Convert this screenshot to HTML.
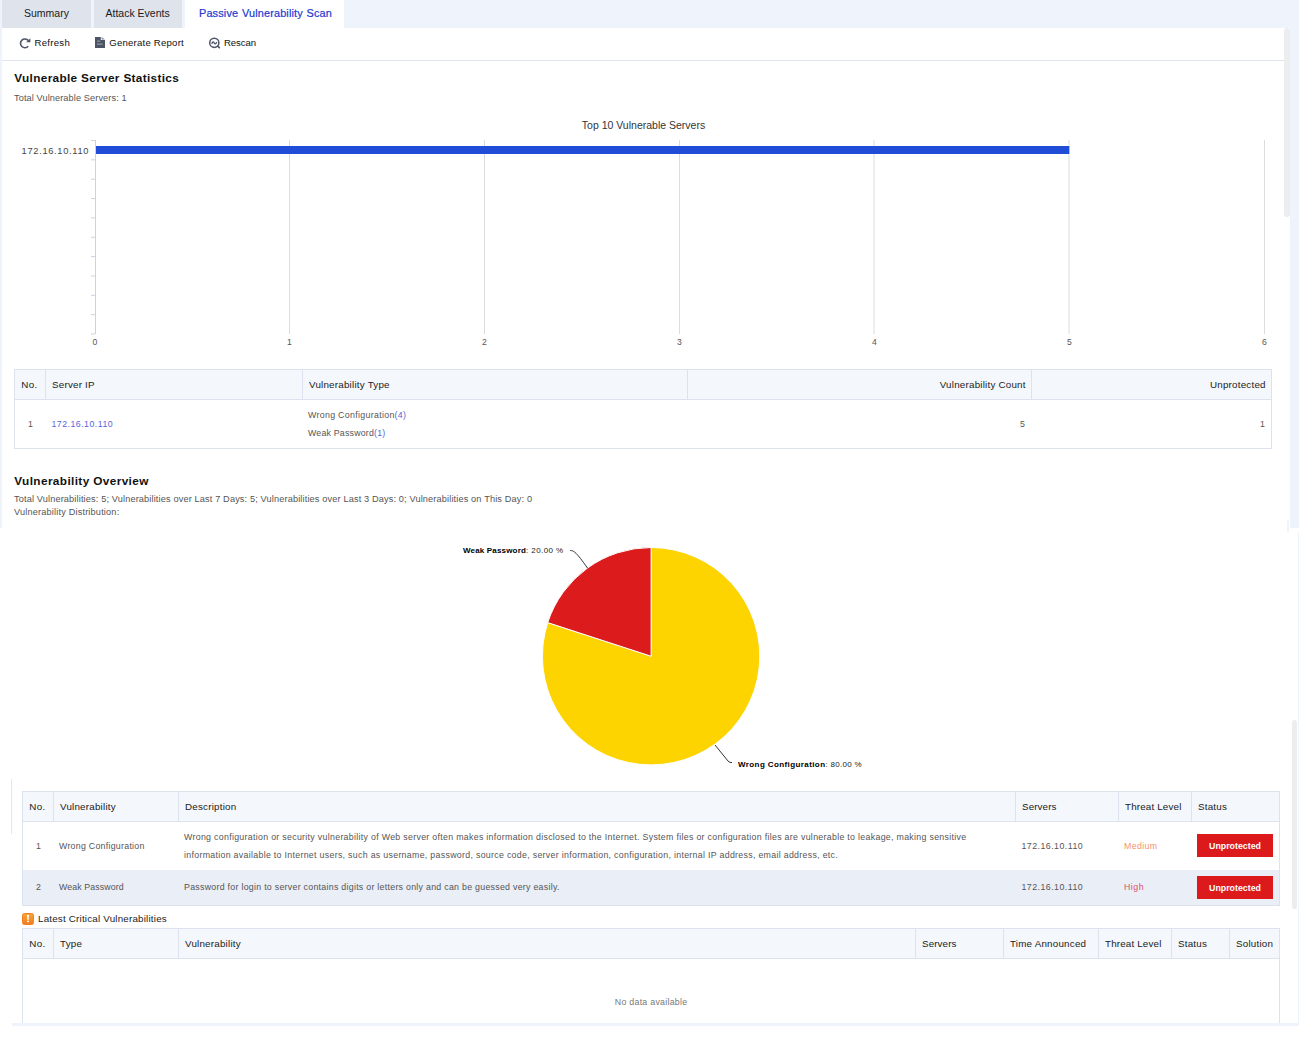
<!DOCTYPE html>
<html><head><meta charset="utf-8"><title>Passive Vulnerability Scan</title>
<style>
html,body{margin:0;padding:0;}
body{width:1299px;height:1038px;position:relative;overflow:hidden;background:#fff;font-family:"Liberation Sans", sans-serif;}
body>div,body>svg{position:absolute;box-sizing:border-box;}
.t{line-height:1;white-space:nowrap;}
</style></head><body>
<div style="left:0px;top:0px;width:1299px;height:528px;background:#eff3fc"></div>
<div style="left:2px;top:28px;width:1288px;height:500px;background:#fff"></div>
<div style="left:2px;top:0px;width:89px;height:28px;background:#dfe3ec"></div>
<div style="left:94px;top:0px;width:88px;height:28px;background:#dfe3ec"></div>
<div style="left:185px;top:0px;width:159px;height:28px;background:#fff"></div>
<div class="t" style="left:24px;top:7.91px;font-size:10.5px;color:#1a1a1a;">Summary</div>
<div class="t" style="left:105.5px;top:7.91px;font-size:10.5px;color:#1a1a1a;">Attack Events</div>
<div class="t" style="left:199px;top:8.07px;font-size:10.9px;color:#2438d2;letter-spacing:0.15px;word-spacing:0.6px;-webkit-text-stroke:0.2px #2438d2;">Passive Vulnerability Scan</div>
<div style="left:2px;top:60px;width:1282px;height:1px;background:#dfe4ee"></div>
<div style="left:1284px;top:28px;width:6px;height:189px;background:#ebedef;border-radius:3px"></div>
<svg style="left:18px;top:35.5px" width="14" height="14" viewBox="0 0 14 14"><path d="M10.2 10.3 A4.4 4.4 0 1 1 10.3 4.6" fill="none" stroke="#4d5466" stroke-width="1.6"/><path d="M8.2 6.2 L12.4 6.2 L12.4 2.2 Z" fill="#4d5466"/></svg>
<div class="t" style="left:34.5px;top:38.07px;font-size:9.6px;color:#111;letter-spacing:0.28px;">Refresh</div>
<svg style="left:94px;top:36px" width="12" height="13" viewBox="0 0 12 13"><path d="M1 1 H6.8 V4 H11 V12 H1 Z" fill="#4d5466"/><path d="M7.6 1 L11 3.4 H7.6 Z" fill="#8a8f9c"/><rect x="3" y="4.6" width="3.2" height="1.1" fill="#9a9fab"/><rect x="3" y="7.6" width="5.6" height="1.1" fill="#9a9fab"/></svg>
<div class="t" style="left:109.3px;top:38.07px;font-size:9.6px;color:#111;letter-spacing:0.21px;">Generate Report</div>
<svg style="left:207px;top:36px" width="15" height="14" viewBox="0 0 15 14"><circle cx="7.3" cy="6.8" r="4.6" fill="none" stroke="#4d5466" stroke-width="1.5"/><path d="M10.6 10 L12.3 11.6" stroke="#4d5466" stroke-width="1.7" stroke-linecap="round"/><path d="M4.7 7.9 Q5.9 4.4 7.1 6.8 Q8.3 9.4 9.8 6.0" fill="none" stroke="#4d5466" stroke-width="1.3"/></svg>
<div class="t" style="left:224px;top:38.07px;font-size:9.6px;color:#111;letter-spacing:-0.08px;">Rescan</div>
<div class="t" style="left:14.3px;top:73.41px;font-size:11.8px;color:#111;font-weight:bold;letter-spacing:0.33px;">Vulnerable Server Statistics</div>
<div class="t" style="left:14px;top:93.51px;font-size:9.2px;color:#555;letter-spacing:0.1px;">Total Vulnerable Servers: 1</div>
<div class="t" style="left:243.50px;width:800px;text-align:center;top:119.91px;font-size:10.5px;color:#333;">Top 10 Vulnerable Servers</div>
<svg style="left:0;top:130px" width="1290" height="230" viewBox="0 130 1290 230"><line x1="289.5" y1="140" x2="289.5" y2="334" stroke="#dcdcdc" stroke-width="1"/><line x1="484.5" y1="140" x2="484.5" y2="334" stroke="#dcdcdc" stroke-width="1"/><line x1="679.5" y1="140" x2="679.5" y2="334" stroke="#dcdcdc" stroke-width="1"/><line x1="874" y1="140" x2="874" y2="334" stroke="#dcdcdc" stroke-width="1"/><line x1="1069" y1="140" x2="1069" y2="334" stroke="#dcdcdc" stroke-width="1"/><line x1="1264.5" y1="140" x2="1264.5" y2="334" stroke="#dcdcdc" stroke-width="1"/><line x1="95.5" y1="140" x2="95.5" y2="334" stroke="#c9d3e3" stroke-width="1"/><line x1="91" y1="140.50" x2="95" y2="140.50" stroke="#c9d3e3" stroke-width="1"/><line x1="91" y1="159.85" x2="95" y2="159.85" stroke="#c9d3e3" stroke-width="1"/><line x1="91" y1="179.20" x2="95" y2="179.20" stroke="#c9d3e3" stroke-width="1"/><line x1="91" y1="198.55" x2="95" y2="198.55" stroke="#c9d3e3" stroke-width="1"/><line x1="91" y1="217.90" x2="95" y2="217.90" stroke="#c9d3e3" stroke-width="1"/><line x1="91" y1="237.25" x2="95" y2="237.25" stroke="#c9d3e3" stroke-width="1"/><line x1="91" y1="256.60" x2="95" y2="256.60" stroke="#c9d3e3" stroke-width="1"/><line x1="91" y1="275.95" x2="95" y2="275.95" stroke="#c9d3e3" stroke-width="1"/><line x1="91" y1="295.30" x2="95" y2="295.30" stroke="#c9d3e3" stroke-width="1"/><line x1="91" y1="314.65" x2="95" y2="314.65" stroke="#c9d3e3" stroke-width="1"/><line x1="91" y1="334.00" x2="95" y2="334.00" stroke="#c9d3e3" stroke-width="1"/><rect x="96" y="146" width="973.3" height="8" fill="#1f4dd8"/></svg>
<div class="t" style="right:1209.82px;top:146.63px;font-size:9.3px;color:#444;letter-spacing:0.68px;">172.16.10.110</div>
<div class="t" style="left:-305.00px;width:800px;text-align:center;top:337.72px;font-size:8.6px;color:#555;">0</div>
<div class="t" style="left:-110.50px;width:800px;text-align:center;top:337.72px;font-size:8.6px;color:#555;">1</div>
<div class="t" style="left:84.50px;width:800px;text-align:center;top:337.72px;font-size:8.6px;color:#555;">2</div>
<div class="t" style="left:279.50px;width:800px;text-align:center;top:337.72px;font-size:8.6px;color:#555;">3</div>
<div class="t" style="left:474.50px;width:800px;text-align:center;top:337.72px;font-size:8.6px;color:#555;">4</div>
<div class="t" style="left:669.50px;width:800px;text-align:center;top:337.72px;font-size:8.6px;color:#555;">5</div>
<div class="t" style="left:864.50px;width:800px;text-align:center;top:337.72px;font-size:8.6px;color:#555;">6</div>
<div style="left:14px;top:369px;width:1258px;height:80px;border:1px solid #dde3ee;background:#fff"></div>
<div style="left:15px;top:370px;width:1256px;height:29px;background:#f4f7fb"></div>
<div style="left:15px;top:399px;width:1256px;height:1px;background:#dde3ee"></div>
<div style="left:45px;top:370px;width:1px;height:29px;background:#dde3ee"></div>
<div style="left:302px;top:370px;width:1px;height:29px;background:#dde3ee"></div>
<div style="left:687px;top:370px;width:1px;height:29px;background:#dde3ee"></div>
<div style="left:1031px;top:370px;width:1px;height:29px;background:#dde3ee"></div>
<div class="t" style="left:21.3px;top:379.70px;font-size:9.8px;color:#222;letter-spacing:0.4px;">No.</div>
<div class="t" style="left:52px;top:379.70px;font-size:9.8px;color:#222;letter-spacing:0.22px;">Server IP</div>
<div class="t" style="left:309px;top:379.70px;font-size:9.8px;color:#222;letter-spacing:0.22px;">Vulnerability Type</div>
<div class="t" style="right:273.28px;top:379.70px;font-size:9.8px;color:#222;letter-spacing:0.22px;">Vulnerability Count</div>
<div class="t" style="right:33.28px;top:379.70px;font-size:9.8px;color:#222;letter-spacing:0.22px;">Unprotected</div>
<div class="t" style="left:28px;top:419.55px;font-size:8.8px;color:#555;">1</div>
<div class="t" style="left:51.5px;top:419.55px;font-size:8.8px;color:#5865d8;letter-spacing:0.46px;">172.16.10.110</div>
<div class="t" style="left:308px;top:410.55px;font-size:8.8px;color:#555;letter-spacing:0.32px;">Wrong Configuration<span style="color:#5865d8">(4)</span></div>
<div class="t" style="left:308px;top:428.55px;font-size:8.8px;color:#555;letter-spacing:0.2px;">Weak Password<span style="color:#5865d8">(1)</span></div>
<div class="t" style="right:274.00px;top:419.55px;font-size:8.8px;color:#555;">5</div>
<div class="t" style="right:34.00px;top:419.55px;font-size:8.8px;color:#555;">1</div>
<div class="t" style="left:14.3px;top:475.61px;font-size:11.8px;color:#111;font-weight:bold;letter-spacing:0.38px;">Vulnerability Overview</div>
<div class="t" style="left:14px;top:494.71px;font-size:9.2px;color:#555;letter-spacing:0.14px;">Total Vulnerabilities: 5; Vulnerabilities over Last 7 Days: 5; Vulnerabilities over Last 3 Days: 0; Vulnerabilities on This Day: 0</div>
<div class="t" style="left:14px;top:508.21px;font-size:9.2px;color:#555;letter-spacing:0.17px;">Vulnerability Distribution:</div>
<div style="left:0px;top:0px;width:2px;height:519px;background:#eff3fc"></div>
<div style="left:0px;top:528px;width:1299px;height:510px;background:#fff"></div>
<div style="left:1298px;top:532px;width:1px;height:491px;background:#eff3fc"></div>
<div style="left:1287px;top:520px;width:2px;height:12px;background:#eff3fc"></div>
<svg style="left:0;top:528px" width="1299" height="250" viewBox="0 528 1299 250">
<path d="M651.1 656.2 L651.1 547.5 A108.7 108.7 0 1 1 547.72 622.61 Z" fill="#fdd300" stroke="#fff" stroke-width="1"/>
<path d="M651.1 656.2 L547.72 622.61 A108.7 108.7 0 0 1 651.1 547.5 Z" fill="#dc1b1d" stroke="#fff" stroke-width="1"/>
<path d="M570 550.5 C574 550.5 576 552 587.5 568" fill="none" stroke="#333" stroke-width="1"/>
<path d="M715 745 L728 761 C729.5 762.5 730.5 762.5 732 762.5" fill="none" stroke="#333" stroke-width="1"/>
</svg>
<div class="t" style="left:463px;top:547.23px;font-size:8px;color:#222;letter-spacing:0.42px;"><b style="color:#000;letter-spacing:0.17px">Weak Password</b>: 20.00 %</div>
<div class="t" style="left:738px;top:761.23px;font-size:8px;color:#222;letter-spacing:0.3px;"><b style="color:#000;letter-spacing:0.4px">Wrong Configuration</b>: 80.00 %</div>
<div style="left:11px;top:779px;width:1px;height:55px;background:#e3e7f0"></div>
<div style="left:22px;top:791px;width:1258px;height:115px;border:1px solid #dde3ee;background:#fff"></div>
<div style="left:23px;top:792px;width:1256px;height:29px;background:#f4f7fb"></div>
<div style="left:23px;top:821px;width:1256px;height:1px;background:#dde3ee"></div>
<div style="left:23px;top:870px;width:1256px;height:35px;background:#e9eef7"></div>
<div style="left:53px;top:792px;width:1px;height:29px;background:#dde3ee"></div>
<div style="left:178px;top:792px;width:1px;height:29px;background:#dde3ee"></div>
<div style="left:1015px;top:792px;width:1px;height:29px;background:#dde3ee"></div>
<div style="left:1118px;top:792px;width:1px;height:29px;background:#dde3ee"></div>
<div style="left:1191px;top:792px;width:1px;height:29px;background:#dde3ee"></div>
<div class="t" style="left:29.3px;top:801.70px;font-size:9.8px;color:#222;letter-spacing:0.4px;">No.</div>
<div class="t" style="left:60px;top:801.70px;font-size:9.8px;color:#222;letter-spacing:0.22px;">Vulnerability</div>
<div class="t" style="left:185px;top:801.70px;font-size:9.8px;color:#222;letter-spacing:0.22px;">Description</div>
<div class="t" style="left:1022px;top:801.70px;font-size:9.8px;color:#222;letter-spacing:0.12px;">Servers</div>
<div class="t" style="left:1125px;top:801.70px;font-size:9.8px;color:#222;letter-spacing:0.17px;">Threat Level</div>
<div class="t" style="left:1198px;top:801.70px;font-size:9.8px;color:#222;letter-spacing:0.22px;">Status</div>
<div class="t" style="left:36px;top:842.05px;font-size:8.8px;color:#555;">1</div>
<div class="t" style="left:59px;top:842.05px;font-size:8.8px;color:#555;letter-spacing:0.27px;">Wrong Configuration</div>
<div class="t" style="left:184px;top:833.05px;font-size:8.8px;color:#555;letter-spacing:0.306px;">Wrong configuration or security vulnerability of Web server often makes information disclosed to the Internet. System files or configuration files are vulnerable to leakage, making sensitive</div>
<div class="t" style="left:184px;top:850.55px;font-size:8.8px;color:#555;letter-spacing:0.305px;">information available to Internet users, such as username, password, source code, server information, configuration, internal IP address, email address, etc.</div>
<div class="t" style="left:1021.5px;top:841.55px;font-size:8.8px;color:#555;letter-spacing:0.46px;">172.16.10.110</div>
<div class="t" style="left:1124px;top:841.55px;font-size:8.8px;color:#f5946a;letter-spacing:0.37px;">Medium</div>
<div style="left:1197px;top:834px;width:76px;height:23px;background:#dc1a1c"></div>
<div class="t" style="left:835.00px;width:800px;text-align:center;top:841.85px;font-size:8.8px;color:#fff;font-weight:bold;">Unprotected</div>
<div class="t" style="left:36px;top:882.55px;font-size:8.8px;color:#555;">2</div>
<div class="t" style="left:59px;top:882.55px;font-size:8.8px;color:#555;letter-spacing:0.1px;">Weak Password</div>
<div class="t" style="left:184px;top:882.55px;font-size:8.8px;color:#555;letter-spacing:0.28px;">Password for login to server contains digits or letters only and can be guessed very easily.</div>
<div class="t" style="left:1021.5px;top:882.55px;font-size:8.8px;color:#555;letter-spacing:0.46px;">172.16.10.110</div>
<div class="t" style="left:1124px;top:882.55px;font-size:8.8px;color:#e0506a;letter-spacing:0.5px;">High</div>
<div style="left:1197px;top:876px;width:76px;height:23px;background:#dc1a1c"></div>
<div class="t" style="left:835.00px;width:800px;text-align:center;top:883.55px;font-size:8.8px;color:#fff;font-weight:bold;">Unprotected</div>
<div style="left:1292px;top:720px;width:5px;height:189px;background:#ebedef;border-radius:3px"></div>
<svg style="left:22px;top:913px" width="12" height="12" viewBox="0 0 12 12"><defs><linearGradient id="og" x1="0" y1="0" x2="0" y2="1"><stop offset="0" stop-color="#f6a83a"/><stop offset="1" stop-color="#f47a1c"/></linearGradient></defs><rect x="0.5" y="0.5" width="11" height="11" rx="2" fill="url(#og)" stroke="#f47f20"/><defs><linearGradient id="eg" x1="0" y1="0" x2="0" y2="1"><stop offset="0" stop-color="#fff" stop-opacity="0.95"/><stop offset="1" stop-color="#fff" stop-opacity="0.6"/></linearGradient></defs><rect x="5" y="2.0" width="2" height="5.5" fill="url(#eg)"/><rect x="5" y="8.0" width="2" height="1.2" fill="#fff" opacity="0.9"/></svg>
<div class="t" style="left:38px;top:914.20px;font-size:9.8px;color:#222;letter-spacing:0.2px;">Latest Critical Vulnerabilities</div>
<div style="left:22px;top:928px;width:1258px;height:120px;border:1px solid #dde3ee;border-bottom:none;background:#fff"></div>
<div style="left:23px;top:929px;width:1256px;height:29px;background:#f4f7fb"></div>
<div style="left:23px;top:958px;width:1256px;height:1px;background:#dde3ee"></div>
<div style="left:53px;top:929px;width:1px;height:29px;background:#dde3ee"></div>
<div style="left:178px;top:929px;width:1px;height:29px;background:#dde3ee"></div>
<div style="left:915px;top:929px;width:1px;height:29px;background:#dde3ee"></div>
<div style="left:1003px;top:929px;width:1px;height:29px;background:#dde3ee"></div>
<div style="left:1098px;top:929px;width:1px;height:29px;background:#dde3ee"></div>
<div style="left:1171px;top:929px;width:1px;height:29px;background:#dde3ee"></div>
<div style="left:1229px;top:929px;width:1px;height:29px;background:#dde3ee"></div>
<div class="t" style="left:29.3px;top:939.00px;font-size:9.8px;color:#222;letter-spacing:0.4px;">No.</div>
<div class="t" style="left:60px;top:939.00px;font-size:9.8px;color:#222;letter-spacing:0.22px;">Type</div>
<div class="t" style="left:185px;top:939.00px;font-size:9.8px;color:#222;letter-spacing:0.22px;">Vulnerability</div>
<div class="t" style="left:922px;top:939.00px;font-size:9.8px;color:#222;letter-spacing:0.12px;">Servers</div>
<div class="t" style="left:1010px;top:939.00px;font-size:9.8px;color:#222;letter-spacing:0.22px;">Time Announced</div>
<div class="t" style="left:1105px;top:939.00px;font-size:9.8px;color:#222;letter-spacing:0.17px;">Threat Level</div>
<div class="t" style="left:1178px;top:939.00px;font-size:9.8px;color:#222;letter-spacing:0.22px;">Status</div>
<div class="t" style="left:1236px;top:939.00px;font-size:9.8px;color:#222;letter-spacing:0.22px;">Solution</div>
<div class="t" style="left:251.13px;width:800px;text-align:center;top:997.55px;font-size:8.8px;color:#777;letter-spacing:0.27px;">No data available</div>
<div style="left:12px;top:1023px;width:1287px;height:3px;background:#eff3fc"></div>
<div style="left:0px;top:1026px;width:1299px;height:12px;background:#fff"></div>
</body></html>
